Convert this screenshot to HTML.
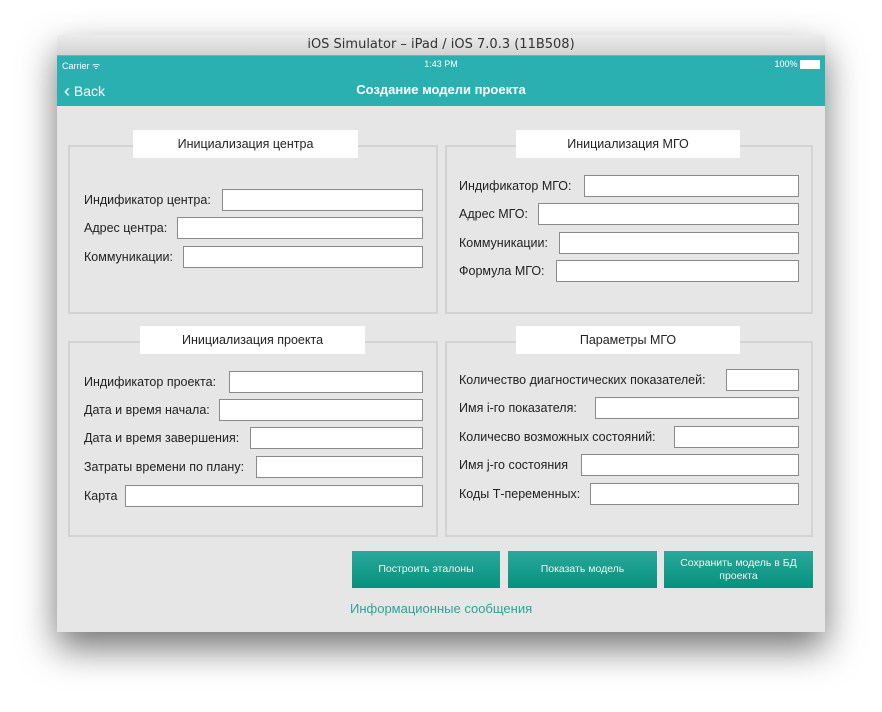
<!DOCTYPE html><html><head><meta charset="utf-8"><style>
body{margin:0;width:882px;height:712px;background:#fff;position:relative;font-family:"Liberation Sans","DejaVu Sans",sans-serif;overflow:hidden}
.win{position:absolute;left:57px;top:35px;width:768px;height:597px;background:#e6e6e6;box-shadow:0 16px 36px rgba(0,0,0,.55);border-radius:4px 4px 0 0;overflow:hidden}
.tb{position:absolute;left:0;top:0;width:768px;height:20px;background:linear-gradient(#ececec,#d2d2d2);border-bottom:1px solid #a0a0a0;text-align:center;font-size:13px;line-height:20px;color:#333;font-family:"DejaVu Sans",sans-serif}
.nav{position:absolute;left:0;top:21px;width:768px;height:50px;background:#2bb0b2;color:#fff}
.a{position:absolute}
.box{position:absolute;border:2px solid #d3d3d3}
.ttl{position:absolute;background:#fff;font-size:12.5px;color:#222;text-align:center;line-height:28px;height:28px}
.lb{position:absolute;font-size:12.5px;color:#222;line-height:22px}
.in{position:absolute;height:20px;background:#fff;border:1px solid #8a8a8a}
.bt{position:absolute;top:516px;height:37px;background:linear-gradient(#2aa99b,#06907e);color:#f3f3f3;font-size:10.5px;text-align:center;display:flex;align-items:center;justify-content:center;line-height:13px}
</style></head><body>
<div class="win">
<div class="tb">iOS Simulator – iPad / iOS 7.0.3 (11B508)</div>
<div class="nav">
<div class="a" style="left:5px;top:3px;font-size:9px">Carrier ᯤ</div>
<div class="a" style="left:0;width:768px;top:3px;font-size:9px;text-align:center">1:43 PM</div>
<div class="a" style="right:5px;top:3px;font-size:9px">100% <span style="display:inline-block;width:18px;height:7px;border:1px solid #fff;background:#fff;vertical-align:middle"></span></div>
<div class="a" style="left:7px;top:24px;font-size:14px"><span style="font-size:18px;position:relative;top:1px">‹</span> Back</div>
<div class="a" style="left:0;width:768px;top:26px;font-size:13px;font-weight:bold;text-align:center">Создание модели проекта</div>
</div>
</div>
<div class="box" style="left:68px;top:145px;width:366px;height:165px"></div>
<div class="box" style="left:445px;top:145px;width:364px;height:165px"></div>
<div class="box" style="left:68px;top:341px;width:366px;height:192px"></div>
<div class="box" style="left:445px;top:341px;width:364px;height:192px"></div>
<div class="ttl" style="left:133px;top:130px;width:225px">Инициализация центра</div>
<div class="ttl" style="left:516px;top:130px;width:224px">Инициализация МГО</div>
<div class="ttl" style="left:140px;top:326px;width:225px">Инициализация проекта</div>
<div class="ttl" style="left:516px;top:326px;width:224px">Параметры МГО</div>

<div class="lb" style="left:84px;top:189px">Индификатор центра:</div><div class="in" style="left:222px;top:189px;width:199px"></div>
<div class="lb" style="left:84px;top:217px">Адрес центра:</div><div class="in" style="left:177px;top:217px;width:244px"></div>
<div class="lb" style="left:84px;top:246px">Коммуникации:</div><div class="in" style="left:183px;top:246px;width:238px"></div>

<div class="lb" style="left:459px;top:175px">Индификатор МГО:</div><div class="in" style="left:584px;top:175px;width:213px"></div>
<div class="lb" style="left:459px;top:203px">Адрес МГО:</div><div class="in" style="left:538px;top:203px;width:259px"></div>
<div class="lb" style="left:459px;top:232px">Коммуникации:</div><div class="in" style="left:559px;top:232px;width:238px"></div>
<div class="lb" style="left:459px;top:260px">Формула МГО:</div><div class="in" style="left:556px;top:260px;width:241px"></div>

<div class="lb" style="left:84px;top:371px">Индификатор проекта:</div><div class="in" style="left:229px;top:371px;width:192px"></div>
<div class="lb" style="left:84px;top:399px">Дата и время начала:</div><div class="in" style="left:219px;top:399px;width:202px"></div>
<div class="lb" style="left:84px;top:427px">Дата и время завершения:</div><div class="in" style="left:250px;top:427px;width:171px"></div>
<div class="lb" style="left:84px;top:456px">Затраты времени по плану:</div><div class="in" style="left:256px;top:456px;width:165px"></div>
<div class="lb" style="left:84px;top:485px">Карта</div><div class="in" style="left:125px;top:485px;width:296px"></div>

<div class="lb" style="left:459px;top:369px">Количество диагностических показателей:</div><div class="in" style="left:726px;top:369px;width:71px"></div>
<div class="lb" style="left:459px;top:397px">Имя i-го показателя:</div><div class="in" style="left:595px;top:397px;width:202px"></div>
<div class="lb" style="left:459px;top:426px">Количесво возможных состояний:</div><div class="in" style="left:674px;top:426px;width:123px"></div>
<div class="lb" style="left:459px;top:454px">Имя j-го состояния</div><div class="in" style="left:581px;top:454px;width:216px"></div>
<div class="lb" style="left:459px;top:483px">Коды Т-переменных:</div><div class="in" style="left:590px;top:483px;width:207px"></div>

<div style="position:absolute;left:57px;top:35px">
<div class="bt" style="left:295px;width:148px">Построить эталоны</div>
<div class="bt" style="left:451px;width:149px">Показать модель</div>
<div class="bt" style="left:607px;width:149px">Сохранить модель в БД<br>проекта</div>
</div>
<div class="a" style="left:350px;top:601px;font-size:13px;color:#2aa597">Информационные сообщения</div>
</body></html>
